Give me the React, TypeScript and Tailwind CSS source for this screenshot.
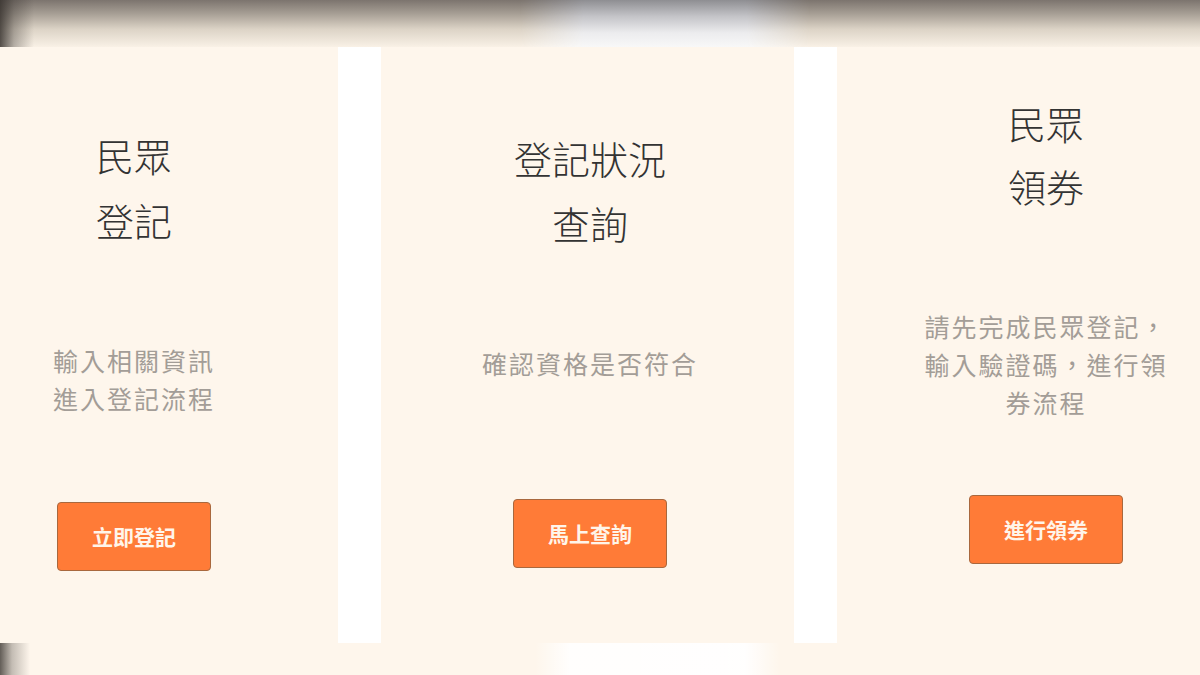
import React from "react";

const FONT = { fontFamily: '"Noto Sans CJK TC", "Noto Sans", sans-serif' };

function Card({
  titleTop,
  titleLines,
  titleLh,
  descTop,
  desc,
  btnTop,
  btn,
}: {
  titleTop: string;
  titleLines: string[];
  titleLh: string;
  descTop: string;
  desc: React.ReactNode;
  btnTop: string;
  btn: string;
}) {
  return (
    <div className="w-[413px] shrink-0 h-full bg-[#fef6ec] flex flex-col items-center pl-[5px]">
      <div className={`${titleTop} ${titleLh} text-[38px] text-[#333333] font-light text-center`}>
        {titleLines.map((l) => (
          <div key={l}>{l}</div>
        ))}
      </div>
      <div className={`${descTop} text-[25px] leading-[38px] tracking-[2px] text-[#a39d97] text-center max-w-[252px]`}>
        {desc}
      </div>
      <button
        className={`${btnTop} w-[154px] h-[69px] rounded-[4px] border border-[#a8683e] bg-[#ff7b37] text-[21px] font-bold text-[#fff5ea] flex items-center justify-center`}
      >
        {btn}
      </button>
    </div>
  );
}

export default function App() {
  return (
    <div className="w-[1200px] h-[675px] overflow-hidden flex flex-col bg-white" style={FONT}>
      <div className="relative h-[47px] shrink-0 bg-[linear-gradient(to_bottom,#7c746e_0%,#a8a096_30%,#dcd3c6_62%,#f9f1e6_100%)]">
        <div className="absolute top-0 bottom-0 left-[520px] w-[290px] bg-[linear-gradient(to_bottom,#8e8e92_0%,#c4c4c8_35%,#ececee_70%,#f8f8f8_100%)] [mask-image:linear-gradient(to_right,transparent_0%,black_22%,black_78%,transparent_100%)]" />
        <div className="absolute inset-0 bg-[linear-gradient(to_right,rgba(55,50,46,0.85)_0px,rgba(55,50,46,0.35)_14px,rgba(55,50,46,0)_34px)]" />
      </div>
      <div className="flex gap-[43px] h-[596px] shrink-0 -ml-[75px]">
        <Card
          titleTop="mt-[75px]"
          titleLines={["民眾", "登記"]}
          titleLh="leading-[65px]"
          descTop="mt-[89px]"
          desc={
            <>
              輸入相關資訊
              <br />
              進入登記流程
            </>
          }
          btnTop="mt-[85px]"
          btn="立即登記"
        />
        <Card
          titleTop="mt-[78px]"
          titleLines={["登記狀況", "查詢"]}
          titleLh="leading-[65px]"
          descTop="mt-[89px]"
          desc="確認資格是否符合"
          btnTop="mt-[117px]"
          btn="馬上查詢"
        />
        <Card
          titleTop="mt-[44px]"
          titleLines={["民眾", "領券"]}
          titleLh="leading-[63px]"
          descTop="mt-[90px]"
          desc="請先完成民眾登記，輸入驗證碼，進行領券流程"
          btnTop="mt-[74px]"
          btn="進行領券"
        />
      </div>
      <div className="relative flex-1 bg-[#fef6ec]">
        <div className="absolute inset-0 bg-[linear-gradient(to_right,rgba(255,255,255,0)_535px,rgba(255,255,255,0.9)_570px,rgba(255,255,255,0.95)_745px,rgba(255,255,255,0)_780px)]" />
        <div className="absolute inset-0 bg-[linear-gradient(to_right,rgba(60,55,50,0.8)_0px,rgba(60,55,50,0.3)_12px,rgba(60,55,50,0)_30px)]" />
      </div>
    </div>
  );
}
